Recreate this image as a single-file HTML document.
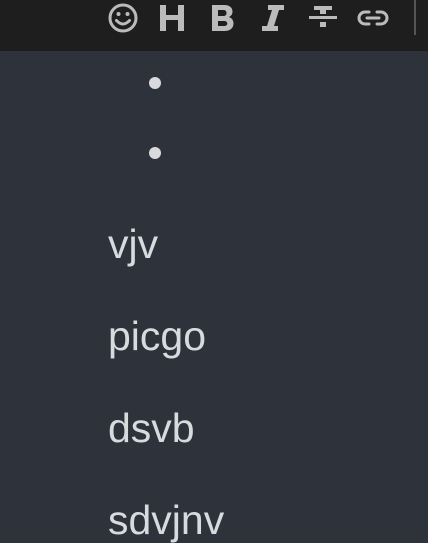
<!DOCTYPE html>
<html><head><style>
body{margin:0;width:428px;height:542px;overflow:hidden;background:#2e333b;font-family:"Liberation Sans",sans-serif;position:relative}
.tb{position:absolute;left:0;top:0;width:428px;height:51px;background:#1e1e1e}
.sep{position:absolute;left:414px;top:0;width:2px;height:35px;background:#555}
svg{position:absolute;top:1px}
.b{position:absolute;left:149px;width:12px;height:12px;border-radius:50%;background:#d8dadd}
.t{position:absolute;left:108px;font-size:41px;color:#d8dadd;line-height:1}
</style></head><body>
<div class="tb">
<svg style="left:106px" width="34" height="34" viewBox="0 0 34 34"><circle cx="17" cy="17" r="13" fill="none" stroke="#bbb" stroke-width="3"/><circle cx="12.5" cy="13" r="2" fill="#bbb"/><circle cx="21.5" cy="13" r="2" fill="#bbb"/><path d="M10.5 19.5q6.5 7 13 0" fill="none" stroke="#bbb" stroke-width="3" stroke-linecap="round"/></svg>
<svg style="left:156px" width="34" height="34" viewBox="0 0 34 34"><path d="M4 4h6v10h12V4h6v26h-6V19H10v11H4z" fill="#bbb"/></svg>
<svg style="left:208px" width="30" height="34" viewBox="0 0 30 34"><path d="M4 4h12c6 0 8.5 3 8.5 6.5 0 3-1.7 4.7-3.7 5.5 2.7.8 4.7 3 4.7 6.5 0 4.5-3.5 7.5-9 7.5H4zM10 9v6h5.5c2 0 3-1.2 3-3s-1-3-3-3zM10 20v5h6c2 0 3.3-1 3.3-2.5S18 20 16 20z" fill="#bbb" fill-rule="evenodd"/></svg>
<svg style="left:258px" width="30" height="34" viewBox="0 0 30 34"><path d="M10 4h16v5h-5l-5 16h4v5H4v-5h5l5-16h-4z" fill="#bbb"/></svg>
<svg style="left:306px" width="34" height="34" viewBox="0 0 34 34"><rect x="8" y="5" width="18" height="4" fill="#bbb"/><rect x="14" y="5" width="6" height="8" fill="#bbb"/><rect x="3" y="15" width="28" height="3" fill="#bbb"/><rect x="14" y="21" width="6" height="5" fill="#bbb"/></svg>
<svg style="left:356px" width="34" height="34" viewBox="0 0 34 34"><path d="M13 11H9a6 6 0 0 0 0 12h4M21 11h4a6 6 0 0 1 0 12h-4M11 17h12" fill="none" stroke="#bbb" stroke-width="3" stroke-linecap="round"/></svg>
<div class="sep"></div>
</div>
<div class="b" style="top:77px"></div>
<div class="b" style="top:147px"></div>
<div class="t" style="top:224px">vjv</div>
<div class="t" style="top:316px">picgo</div>
<div class="t" style="top:408px">dsvb</div>
<div class="t" style="top:500px">sdvjnv</div>
</body></html>
